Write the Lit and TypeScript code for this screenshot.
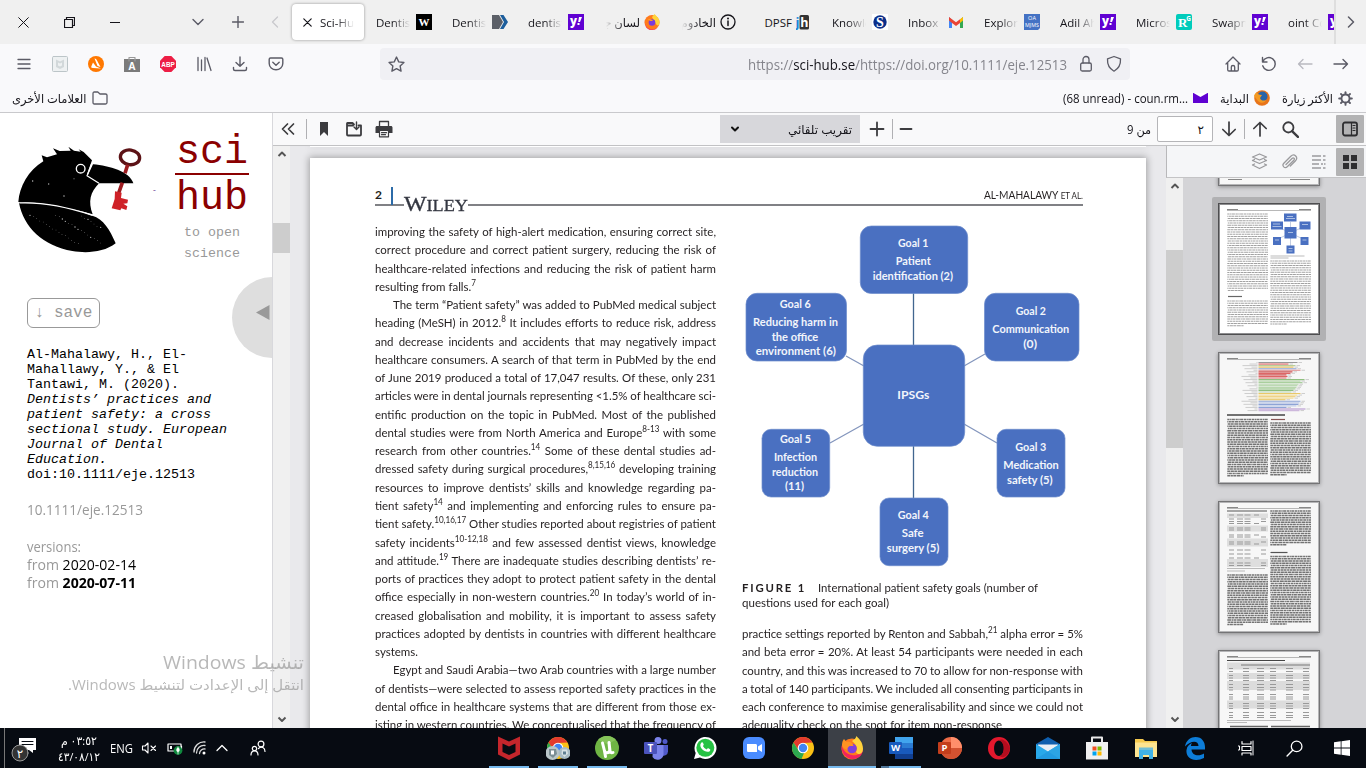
import { LitElement, html, svg, css } from "lit";
import { customElement, property } from "lit/decorators.js";

/* A run of text set to an exact measure: by word spacing, or by glyph width. */
@customElement("fit-text")
class FitText extends LitElement {
  @property({ type: Number }) w = 0;
  @property() mode = "scale";
  static styles = css`
    :host { display: inline-block; direction: ltr; white-space: nowrap; text-align: left; }
    .run { display: inline-block; transform-origin: 0 50%; }
  `;
  render() {
    return html`<span class="run"><slot></slot></span>`;
  }
  firstUpdated() {
    this.style.width = this.w + "px";
    const run = this.renderRoot.querySelector(".run") as HTMLElement;
    const natural = run.getBoundingClientRect().width;
    if (this.mode === "words") {
      const narrow = 0.955;
      const gaps = (this.textContent || "").trim().split(" ").length - 1;
      if (gaps > 0) run.style.wordSpacing = (this.w / narrow - natural) / gaps + "px";
      run.style.transform = `scaleX(${narrow})`;
    } else if (natural > 0) {
      run.style.transform = `scaleX(${this.w / natural})`;
    }
  }
}

const ic = (w: number, h: number, vb: string, body: unknown) =>
  html`<svg width=${w} height=${h} viewBox=${vb} fill="none" stroke-linecap="round" stroke-linejoin="round">${body}</svg>`;

/* ---------- favicons ---------- */
const fav: Record<string, unknown> = {
  wiley: svg`<rect width="16" height="16" fill="#000"/><text x="8" y="11.5" text-anchor="middle" font-family="Liberation Serif,serif" font-weight="700" font-size="11" fill="#fff">W</text>`,
  els: svg`<path d="M0 1h7l4 7-4 7H0z" fill="#5c6068"/><path d="M8 1h3.500l4.500 7-4.500 7H8l4-7z" fill="#1c5e9c"/>`,
  yahoo: svg`<rect width="16" height="16" fill="#6001d2"/><text x="2" y="11.300" font-family="Open Sans,sans-serif" font-weight="800" font-size="11.500" fill="#fff">y</text><path d="M11 3h3l-2 5h-1.800zM9.500 9h2v2h-2z" fill="#fff"/>`,
  fire: svg`<circle cx="8" cy="8.500" r="7.500" fill="#ff7a1c"/><path d="M1 6a7.500 7.500 0 0 0 14.500 4C14 15 10 16 8 16 3 16 0 12 1 6z" fill="#f5265f"/><path d="M8 3c1-1 2-2 2.500-3C12 2 16 4 15.500 9.500 15 12 13 12 12 10z" fill="#ffd43a"/><circle cx="8" cy="8.500" r="3.300" fill="#7a3cdc"/><path d="M3.500 5.500C6 4 8 5.500 9 7H6.500z" fill="#ffa024"/>`,
  info: svg`<circle cx="8" cy="8" r="7" stroke="#15141a" stroke-width="1.300"/><path d="M8 7v4.500" stroke="#15141a" stroke-width="1.500"/><circle cx="8" cy="4.500" r="1" fill="#15141a"/>`,
  jh: svg`<rect x="3.500" y="1" width="9.500" height="14.500" rx="1.500" fill="#333"/><text x="-.5" y="13" font-family="Open Sans,sans-serif" font-weight="700" font-size="13" fill="#1b86d8">j</text><text x="4.300" y="13" font-family="Open Sans,sans-serif" font-weight="700" font-size="12.500" fill="#fff">h</text>`,
  s: svg`<rect width="16" height="16" fill="#fff"/><circle cx="8" cy="8" r="6.700" fill="#0b2f8a"/><text x="8" y="12.800" text-anchor="middle" font-family="Liberation Serif,serif" font-weight="700" font-size="14" fill="#fff">S</text>`,
  gmail: svg`<path d="M1 3v11h3V6z" fill="#4285f4"/><path d="M12 6v8h3V3z" fill="#34a853"/><path d="M1 3l3 2.200L8 8.300l4-3.100V9l-4 3-4-3-3-2.500z" fill="#ea4335"/><path d="M12 5.200L15 3v3.500L12 9z" fill="#fbbc04"/>`,
  oa: svg`<path d="M0 0h16v14l-2 2H0z" fill="#4472c4"/><text x="8" y="6" text-anchor="middle" font-family="Open Sans,sans-serif" font-size="5.500" fill="#fff">OA</text><text x="1" y="12.500" font-family="Open Sans,sans-serif" font-size="5" fill="#fff" textLength="14" lengthAdjust="spacingAndGlyphs">MJMS</text>`,
  rg: svg`<rect width="16" height="16" rx="2" fill="#00ccbb"/><text x="2" y="13" font-family="Liberation Serif,serif" font-weight="700" font-size="13" fill="#fff">R</text><text x="10.200" y="6.500" font-family="Open Sans,sans-serif" font-weight="700" font-size="6.500" fill="#fff">G</text>`,
};
const tabs: Array<[string, string, boolean?]> = [
  ["Dentistry", "wiley"], ["Dentistry", "els"], ["dentistry", "yahoo"], ["لسان جاف", "fire", true],
  ["الخادوم غير", "info", true], ["DPSF", "jh"], ["Knowledge", "s"], ["Inbox (1)", "gmail"], ["Explorer", "oa"],
  ["Adil Ahmed", "yahoo"], ["Microsoft", "rg"], ["Swapna", "yahoo"], ["oint Com", "yahoo"],
];

/* ---------- browser navigation icons ---------- */
const G = "#5b5b66";
const nav = {
  menu: ic(16, 16, "0 0 16 16", svg`<path d="M2 3.500h12M2 8h12M2 12.500h12" stroke=${G} stroke-width="1.300"/>`),
  mc: ic(16, 16, "0 0 16 16", svg`<rect x=".5" y=".5" width="15" height="15" rx="1" fill="#eef1f2" stroke="#bcc5c8"/><path d="M4 3.500l4 2 4-2v7.500l-4 2-4-2z" fill="#d2d8da"/><path d="M6 6.500l2 1 2-1v3l-2 1-2-1z" fill="#eef1f2"/>`),
  avast: ic(16, 16, "0 0 16 16", svg`<circle cx="8" cy="8" r="8" fill="#ff7800"/><path d="M6.500 2.500c1.500 0 2 1 2.500 2l3.500 6.500L9.500 10zM5 6.500l3 4 5 2-8-.5c-2 0-2-1-1.500-2z" fill="#fff"/>`),
  bag: ic(16, 16, "0 0 16 16", svg`<path d="M0 3h16v13H0z" fill="#7b7b7b"/><path d="M5 5V1.500h6V5" stroke="#999" stroke-width="1.200"/><text x="8" y="13.500" text-anchor="middle" font-family="Open Sans,sans-serif" font-weight="700" font-size="10" fill="#fff">A</text>`),
  abp: ic(16, 16, "0 0 16 16", svg`<path d="M4.700 0h6.600L16 4.700v6.600L11.300 16H4.700L0 11.300V4.700z" fill="#ed1e45"/><text x="1.300" y="11" font-family="Liberation Sans,sans-serif" font-weight="700" font-size="8" textLength="13.500" lengthAdjust="spacingAndGlyphs" fill="#fff">ABP</text>`),
  lib: ic(16, 16, "0 0 16 16", svg`<path d="M2 1.500v13M5.500 4v10.500M9 1.500v13M11 2l4 12.500" stroke=${G} stroke-width="1.300"/>`),
  dl: ic(16, 16, "0 0 16 16", svg`<path d="M8 1v9M4 6.500L8 10.300l4-3.800M1.500 11.500V13c0 1 .8 1.500 1.500 1.500h10c.8 0 1.500-.5 1.500-1.500v-1.500" stroke=${G} stroke-width="1.400"/>`),
  pocket: ic(16, 16, "0 0 16 16", svg`<path d="M2.500 2h11c.8 0 1.300.5 1.300 1.300V7.500a6.800 6.300 0 0 1-13.600 0V3.300C1.200 2.500 1.700 2 2.500 2zM4.800 6.200L8 9.300l3.200-3.100" stroke=${G} stroke-width="1.400"/>`),
  star: ic(17, 17, "0 0 16 16", svg`<path d="M8 1l2.100 4.500 4.900.6-3.600 3.300.9 4.900L8 11.900l-4.300 2.400.9-4.900L1 6.100l4.900-.6z" stroke=${G} stroke-width="1.300"/>`),
  lock: ic(16, 18, "0 0 16 18", svg`<rect x="2.700" y="8" width="10.600" height="8" rx="1.500" stroke=${G} stroke-width="1.300"/><path d="M5 8V4.500a3 3 0 0 1 6 0V8" stroke=${G} stroke-width="1.300"/>`),
  shield: ic(16, 18, "0 0 16 18", svg`<path d="M8 1.500l6.500 2.300c.3 5.200-1.500 9.700-6.500 12.400C3 13.500 1.200 9 1.500 3.800z" stroke=${G} stroke-width="1.300"/>`),
  home: ic(16, 16, "0 0 16 16", svg`<path d="M1 8l7-7 7 7M2.700 7v6.700c0 .8.500 1.300 1.300 1.300h8c.8 0 1.300-.5 1.300-1.300V7M6.300 15v-4c0-1 .7-1.500 1.700-1.500s1.700.5 1.700 1.500v4" stroke=${G} stroke-width="1.300"/>`),
  reload: ic(16, 16, "0 0 16 16", svg`<path d="M1.500 1.500V6H6M1.800 5.800A6.400 6.400 0 1 1 1.700 9.800" stroke=${G} stroke-width="1.400"/>`),
  back: ic(16, 16, "0 0 16 16", svg`<path d="M15 8H1.500M6 3.500L1.500 8 6 12.500" stroke="#b9b9c0" stroke-width="1.300"/>`),
  fwd: ic(16, 16, "0 0 16 16", svg`<path d="M1 8h13.500M10 3.500L14.500 8 10 12.500" stroke=${G} stroke-width="1.400"/>`),
};
const teeth = [0, 45, 90, 135, 180, 225, 270, 315];
const gear = ic(15, 15, "0 0 16 16", svg`<circle cx="8" cy="8" r="4.300" stroke=${G} stroke-width="2"/>${teeth.map((a) => svg`<path d="M8 3V1.200" stroke=${G} stroke-width="2" transform="rotate(${a} 8 8)"/>`)}`);

/* ---------- PDF viewer icons ---------- */
const D = "#3c3c3f";
const L = "#9a9a9d";
const pdf = {
  dbl: ic(16, 16, "0 0 16 16", svg`<path d="M7.500 3L2.500 8l5 5M13.500 3l-5 5 5 5" stroke=${D} stroke-width="1.700"/>`),
  mark: ic(16, 16, "0 0 16 16", svg`<path d="M4 1h8v14l-4-4-4 4z" fill=${D}/>`),
  open: ic(16, 16, "0 0 16 16", svg`<path d="M8 3.500L6.500 2H1.500C1 2 1 2.300 1 3v10.500c0 .8.300 1 1 1h12c.7 0 1-.3 1-1V4.500h-2.500M1 4.500h6" stroke=${D} stroke-width="1.800"/><path d="M10.500 1v7M8 6l2.500 2.500L13 6" stroke=${D} stroke-width="1.400"/>`),
  print: ic(18, 18, "0 0 18 18", svg`<path d="M4.500 6V1.500h9V6" stroke=${D} stroke-width="1.300"/><path d="M2 6h14c.8 0 1.500.7 1.500 1.500V13H14v-2.500H4V13H.5V7.500C.5 6.700 1.200 6 2 6z" fill=${D}/><path d="M4.500 10.500h9v6.300h-9zM6.500 12.700h5M6.500 14.700h4" stroke=${D} stroke-width="1.200"/>`),
  chev: ic(10, 10, "0 0 10 10", svg`<path d="M2 3.500l3 3 3-3" stroke="#111" stroke-width="2"/>`),
  plus: ic(16, 16, "0 0 16 16", svg`<path d="M1.500 8h13M8 1.500v13" stroke=${D} stroke-width="1.800"/>`),
  minus: ic(14, 16, "0 0 14 16", svg`<path d="M1.500 8h11" stroke=${D} stroke-width="1.800"/>`),
  down: ic(16, 16, "0 0 16 16", svg`<path d="M8 1v13M1.800 8.500L8 14.500l6.200-6" stroke=${D} stroke-width="1.700"/>`),
  up: ic(16, 16, "0 0 16 16", svg`<path d="M8 15V2M1.800 7.500L8 1.500l6.200 6" stroke=${D} stroke-width="1.700"/>`),
  find: ic(17, 17, "0 0 16 16", svg`<circle cx="6" cy="6" r="4.800" stroke=${D} stroke-width="1.700"/><path d="M9.700 9.700L15 15" stroke=${D} stroke-width="2.200"/>`),
  side: ic(16, 16, "0 0 16 16", svg`<rect x="1" y="1.500" width="14" height="13" rx="2" stroke="#2e2e30" stroke-width="1.800"/><path d="M9.500 2v12M11 4.500h2M11 7h2M11 9.500h2" stroke="#2e2e30" stroke-width="1.200"/>`),
  layers: ic(17, 17, "0 0 17 17", svg`<path d="M8.500 1l7 3-7 3-7-3zM1.500 7.500l7 3 7-3M1.500 7.500l2-1M15.500 7.500l-2-1M1.500 12l7 3.500 7-3.500M1.500 12l2-1M15.500 12l-2-1" stroke=${L} stroke-width="1.300"/>`),
  clip: ic(17, 17, "0 0 17 17", svg`<path d="M5 11.500l6-6c1.500-1.500 3.200.2 1.800 1.700l-6.300 6.300c-2.800 2.800-6-.8-3.700-3.300l7-7c3.500-3.300 8 1.200 4.500 4.800l-5 5" stroke=${L} stroke-width="1.300"/>`),
  outline: ic(16, 16, "0 0 16 16", svg`<path d="M1 2h9M1 6h9M1 10h7M1 14h9M12 2h2.500M12 6h2.500M10 10h2M13 10h1.500M12 14h2.500" stroke=${L} stroke-width="1.700" stroke-linecap="butt"/>`),
  grid: ic(16, 16, "0 0 16 16", svg`<path d="M1 1h6v6H1zM9 1h6v6H9zM1 9h6v6H1zM9 9h6v6H9z" fill="#2e2e30"/>`),
};
const arrowUp = ic(10, 10, "0 0 10 10", svg`<path d="M1.500 7L5 3.500 8.500 7" stroke="#555" stroke-width="1.900" stroke-linecap="butt"/>`);
const arrowDn = ic(10, 10, "0 0 10 10", svg`<path d="M1.500 3.500L5 7l3.500-3.500" stroke="#555" stroke-width="1.900" stroke-linecap="butt"/>`);

/* ---------- raven logo ---------- */
const specks: Array<[number, number]> = [];
for (let i = 0; i < 46; i++) specks.push([90 + ((i * 67) % 220), 310 + ((i * 41) % 90)]);
const raven = html`<svg class="raven" width="148" height="148" viewBox="0 0 444 444">
  <path d="M55 270C58 225 85 175 130 148l-5-18 16 6 30-9-12-18 20 8 33-1-7-12 17 12 20 3-6-7 15 8 25 25-15 42 37 26c-28 28-34 55-20 94C200 285 110 268 55 270z" fill="#000"/>
  <path d="M279 157c50 5 108 20 121 57H297l-34-23z" fill="#000"/>
  <path d="M57 272c62-3 152 12 220 39 33 10 53 42 70 83-35 28-90 30-130 23C130 402 70 345 57 272z" fill="#000"/>
  <path d="M58 273c70-3 150 14 220 37M297 214l-36-23 14-36" fill="none" stroke="#fff" stroke-width="3.500"/>
  <circle cx="242" cy="170" r="13" fill="none" stroke="#fff" stroke-width="4"/>
  ${specks.filter(([x, y]) => x > 80 + (y - 305) * 1.1).map(([x, y], i) => svg`<circle cx=${x} cy=${y} r=${i % 5 ? 1.1 : 2} fill="#bbb"/>`)}
  <circle cx="98" cy="207" r="2" fill="#ccc"/><circle cx="146" cy="216" r="2" fill="#bbb"/><circle cx="192" cy="252" r="2" fill="#ccc"/><circle cx="222" cy="200" r="1.500" fill="#bbb"/>
  <ellipse cx="390" cy="136" rx="29" ry="22" fill="none" stroke="#5c1216" stroke-width="10" transform="rotate(8 390 136)"/>
  <path d="M383 158l-8 26M367 212l-12 34" stroke="#9c1c20" stroke-width="11"/>
  <path d="M345 238l20 4-2 16 21 5-2 11-12 1 12 8-3 11-15-5-3 6-26-6 9-28z" fill="#cf2127"/>
</svg>`;

/* ---------- article ---------- */
type Line = [string, number?, number?]; // text with ^sup^ marks, measure, indent
const left: Line[] = [
  ["improving the safety of high-alert medication, ensuring correct site,"],
  ["correct procedure and correct patient surgery, reducing the risk of"],
  ["healthcare-related infections and reducing the risk of patient harm"],
  ["resulting from falls.^7^", 101],
  ["The term “Patient safety” was added to PubMed medical subject", 323, 18],
  ["heading (MeSH) in 2012.^8^ It includes efforts to reduce risk, address"],
  ["and decrease incidents and accidents that may negatively impact"],
  ["healthcare consumers. A search of that term in PubMed by the end"],
  ["of June 2019 produced a total of 17,047 results. Of these, only 231"],
  ["articles were in dental journals representing <1.5% of healthcare sci-"],
  ["entific production on the topic in PubMed. Most of the published"],
  ["dental studies were from North America and Europe^8-13^ with some"],
  ["research from other countries.^14^ Some of these dental studies ad-"],
  ["dressed safety during surgical procedures,^8,15,16^ developing training"],
  ["resources to improve dentists’ skills and knowledge regarding pa-"],
  ["tient safety^14^ and implementing and enforcing rules to ensure pa-"],
  ["tient safety.^10,16,17^ Other studies reported about registries of patient"],
  ["safety incidents^10-12,18^ and few assessed dentist views, knowledge"],
  ["and attitude.^19^ There are inadequate studies describing dentists’ re-"],
  ["ports of practices they adopt to protect patient safety in the dental"],
  ["office especially in non-western countries.^20^ In today’s world of in-"],
  ["creased globalisation and mobility, it is important to assess safety"],
  ["practices adopted by dentists in countries with different healthcare"],
  ["systems.", 43],
  ["Egypt and Saudi Arabia—two Arab countries with a large number", 323, 18],
  ["of dentists—were selected to assess reported safety practices in the"],
  ["dental office in healthcare systems that are different from those ex-"],
  ["isting in western countries. We conceptualised that the frequency of"],
];
const right: Line[] = [
  ["practice settings reported by Renton and Sabbah,^21^ alpha error = 5%"],
  ["and beta error = 20%. At least 54 participants were needed in each"],
  ["country, and this was increased to 70 to allow for non-response with"],
  ["a total of 140 participants. We included all consenting participants in"],
  ["each conference to maximise generalisability and since we could not"],
  ["adequality check on the spot for item non-response", 260],
];
const line = ([t, w = 341, ind = 0]: Line) => {
  const parts = t.split("^");
  return html`<div class="ln ${ind ? "ind" : ""}"><fit-text .w=${w} mode=${w < 110 ? "scale" : "words"}>${parts.map((p, i) => (i % 2 ? html`<sup>${p}</sup>` : p))}</fit-text></div>`;
};

/* nodes: x, y, w, h, radius, then labels as [text, x1, x2, baseline] */
const nodes: Array<{ b: number[]; t: Array<[string, number, number, number]> }> = [
  { b: [860.3, 226, 107.4, 67.500, 11], t: [["Goal 1", 898, 928.3, 247], ["Patient", 895.7, 930.7, 265], ["identification (2)", 872.7, 953, 279.7]] },
  { b: [746, 293.3, 100.500, 67.700, 11], t: [["Goal 6", 779.7, 810.7, 308.3], ["Reducing harm in", 753, 838, 326], ["the office", 771.7, 818.3, 341], ["environment (6)", 755.7, 836, 355]] },
  { b: [984.5, 293.3, 94.500, 67.700, 11], t: [["Goal 2", 1015.7, 1046, 315.3], ["Communication", 992.3, 1069.3, 333.3], ["(0)", 1023.3, 1037, 348]] },
  { b: [863.3, 345, 101.400, 101.300, 14], t: [["IPSGs", 897.3, 929.3, 399.3]] },
  { b: [762, 429.3, 67.700, 67.700, 9], t: [["Goal 5", 780, 811, 443], ["Infection", 774, 817, 461], ["reduction", 772, 818, 476], ["(11)", 785, 804, 490]] },
  { b: [997, 429.3, 68, 67.700, 9], t: [["Goal 3", 1015.3, 1046.3, 451.3], ["Medication", 1003.3, 1058.7, 469.3], ["safety (5)", 1007, 1052.7, 484]] },
  { b: [880, 498, 68, 67.700, 9], t: [["Goal 4", 897.7, 928.7, 519], ["Safe", 901.7, 923.7, 536.7], ["surgery (5)", 886.7, 939.3, 551.7]] },
];
const figure = html`<svg class="figure" width="341" height="352" viewBox="742 220 341 352">
  <path d="M913.500 293v53M913.500 446v53" stroke="#41668f" stroke-width="1.300"/>
  <path d="M846 356l18 10M964 366l21-12M964 424l33 19M864 424l-34 19" stroke="#8496bd" stroke-width="1.300"/>
  ${nodes.map((n) => svg`<rect x=${n.b[0]} y=${n.b[1]} width=${n.b[2]} height=${n.b[3]} rx=${n.b[4]} fill="#4a70c1" stroke="#6d8ccc" stroke-width=".7"/>
    ${n.t.map(([s, a, b, y]) => svg`<text x=${a} y=${y} textLength=${b - a} lengthAdjust="spacingAndGlyphs" class="nt">${s}</text>`)}`)}
</svg>`;

/* ---------- thumbnails ---------- */
const textBlock = (x: number, y1: number, y2: number, w: number, ink: string, sw = 1.3) => {
  const out = [];
  let i = 0;
  for (let y = y1; y < y2; y += 2.25, i++) {
    const last = y + 2.25 >= y2;
    out.push(svg`<path d="M${x} ${y}h${last ? w * 0.4 : w}" stroke=${ink} stroke-width=${sw} stroke-dasharray="${2.3 + (i % 3) * 0.8} .5 ${1.4 + (i % 4) * 0.6} .4 3 .6" stroke-dashoffset=${(i * 7) % 5}/>`);
  }
  return out;
};
const header = svg`<path d="M9 7.500h84" stroke="#999" stroke-width=".7"/><path d="M9 6.500h11M81 6.500h12" stroke="#888" stroke-width="1"/>`;
const barData: Array<[number, string]> = [
  [39, "#999"], [30, "#d66"], [37, "#b8cf9a"], [35, "#e8c46a"], [38, "#8ea4d6"], [42, "#d88"], [34, "#c55"], [32, "#d66"], [28, "#c44"], [29, "#d66"], [28, "#d77"],
  [46, "#8fbf7f"], [42, "#b9d6ae"], [44, "#a9cf9d"], [40, "#b9d6ae"], [39, "#a9cf9d"], [38, "#b9d6ae"], [37, "#a9cf9d"], [35, "#8fbf7f"], [33, "#b9d6ae"], [42, "#e9c868"], [39, "#f2dd9a"],
  [37, "#efd388"], [35, "#f2dd9a"], [27, "#e9c868"], [42, "#8ea4d6"], [41, "#c0cce8"], [40, "#8ea4d6"], [38, "#c0cce8"], [28, "#8ea4d6"], [47, "#b08ccc"], [41, "#cdb8dc"],
];
const P2 = "#a2a2a2";
const P3 = "#747474";
const thumbs = [
  svg`<path d="M10 125.500h14M72 125.500h20" stroke="#888" stroke-width="1.200"/>`,
  svg`${header}${textBlock(9.3, 11, 88, 40.700, P2, 1)}<path d="M10 93.500h14" stroke="#666" stroke-width="1.200"/>${textBlock(9.3, 98, 123, 40.700, P2, 1)}
    <path d="M72.500 19v27M60 24l25 12M85 24L60 36" stroke="#9aabce" stroke-width=".6"/>
    <path d="M66 10.500h12.500v8H66zM53 18.500h12v8H53zM81.500 18.500h11v8h-11zM66.500 24h12v11.500h-12zM55 34h8v8h-8zM82.500 34h8v8h-8zM68.500 42.500h8v8h-8z" fill="#4a70c1"/>
    <path d="M69 13.500h6M68 15.500h9M55 21h7M54.500 23.500h9M84 21.500h6M70 29.500h5M57 37h4M84.500 37h4M70.500 45.500h4M70.500 48h4" stroke="#d3def2" stroke-width=".7"/>
    <path d="M52.500 53h34M52.500 55h18" stroke="#aaa" stroke-width=".8"/>${textBlock(52.300, 58, 123, 40.700, P2, 1)}`,
  svg`${header}${barData.map(([w, c], i) => svg`<path d="M40.500 ${10.500 + i * 1.55}h${w}" stroke=${c} stroke-width="1.150"/><path d="M${41.500 + w} ${10.500 + i * 1.55}h3.500M${38.500 - ((i * 7) % 16)} ${10.500 + i * 1.55}H39.500" stroke="#bbb" stroke-width=".7"/>`)}
    <path d="M9 63h58" stroke="#444" stroke-width="1.300"/>${textBlock(9.3, 67.500, 124, 40.700, P3, 1.5)}<path d="M53 67.500h14" stroke="#855" stroke-width="1.200"/>${textBlock(52.300, 71, 124, 40.700, P3, 1.5)}`,
  svg`${header}<path d="M9 10h40" stroke="#555"/><path d="M9 12.500h41v4.500H9zM9 24.500h41v6H9zM9 37.500h41v8H9zM9 58h41v8H9z" fill="#dedede"/>
    ${[14, 18, 20.500, 22.500, 27, 29, 34, 36, 41, 43, 49, 53, 57, 62, 64.500].map((y, i) => svg`<path d="M11 ${y}h5M19 ${y}h6M26.500 ${y}h6M${i % 3 ? 43 : 36} ${y}h5" stroke="#999" stroke-width="1"/>`)}
    <path d="M9 67.500h38M9 70h18" stroke="#aaa" stroke-width=".8"/>${textBlock(9.3, 74, 124, 40.700, P3, 1.5)}${textBlock(52.300, 10, 46, 40.700, P3, 1.5)}<path d="M52.500 51.500h17" stroke="#555" stroke-width="1.200"/>${textBlock(52.300, 55.500, 124, 40.700, P3, 1.5)}`,
  svg`${header}<path d="M9 10.500h58" stroke="#444" stroke-width="1.100"/><path d="M9 12.500h83v7H9zM9 23h83v6H9zM9 31h83v9H9zM9 50.500h83v8H9z" fill="#dcdcdc"/><path d="M23 15h69" stroke="#aaa" stroke-width="2"/>
    ${[18.500, 21.500, 25.500, 28, 30.500, 34.500, 37.500, 40, 44.500, 47, 49, 53.500, 56, 58.500, 62.500, 65.500, 67.500].map((y) => svg`<path d="M11 ${y}h4M25 ${y}h6M39 ${y}h7M52 ${y}h6M68 ${y}h7M85 ${y}h6" stroke="#999" stroke-width="1"/>`)}
    <path d="M9 70.500h64M9 72.500h20" stroke="#aaa" stroke-width=".8"/><path d="M12 76.500h38M53 76.500h39" stroke="#666" stroke-width="1.400"/>`,
];

/* ---------- taskbar ---------- */
const chromeRing = svg`<circle cx="12" cy="12" r="11" fill="#fbc116"/><path d="M2.500 6.500A11 11 0 0 1 21.500 6.500L12 7 7.500 14z" fill="#e33b2e"/><path d="M2.500 6.500L8 15l5 2-2.500 6A11 11 0 0 1 2.500 6.500z" fill="#2da94f"/><circle cx="12" cy="12" r="5.300" fill="#fff"/><circle cx="12" cy="12" r="4.200" fill="#4285f4"/>`;
const apps: Array<[string, unknown]> = [
  ["run", svg`<path d="M1 .5l11 5L23 .5v18l-11 5.500-11-5.500zM5.500 7.500V16l6.500 3 6.500-3V7.500L12 10.500z" fill="#c5262c" fill-rule="evenodd"/>`],
  ["run", svg`${chromeRing}<circle cx="6.500" cy="17" r="7" fill="#b9c6c9"/><path d="M3 13h7l1 5-4 4-4-3z" fill="#7c8f94"/><path d="M5 14.500h3v4H5z" fill="#fff"/><circle cx="18.500" cy="17" r="6" fill="#a9bcc4"/><path d="M16 13.500h5l1 4-3.500 3.500-3-3z" fill="#d7e2e4"/><path d="M17 15.500h3v3h-3z" fill="#5f7f92"/>`],
  ["run", svg`<circle cx="12" cy="12" r="12" fill="#6fb544"/><path d="M3 4a12 12 0 0 1 18 0L12 8z" fill="#85c45a"/><path d="M7.500 7l2 8c.8 2.500 4.500 2.200 5.300-.5L14 6.500l1 8.500c.5 1.800 2 2 3 1.500M9.500 15l1 5.500" stroke="#fff" stroke-width="3"/>`],
  ["", svg`<circle cx="21" cy="5.500" r="2.500" fill="#5059c9"/><circle cx="14" cy="4.500" r="3.500" fill="#7b83eb"/><path d="M16 9h8v6.500a4.500 4.500 0 0 1-6 4z" fill="#5059c9"/><path d="M9 9h10.500v8a6 6 0 0 1-11 4z" fill="#7b83eb"/><rect y="6" width="13" height="12" rx="1" fill="#4b53bc"/><text x="6.500" y="15.500" text-anchor="middle" font-family="Open Sans,sans-serif" font-weight="700" font-size="10" fill="#fff">T</text>`],
  ["", svg`<path d="M1 23l1.700-6A11 11 0 1 1 7 21.500z" fill="#fff"/><circle cx="12.300" cy="11.800" r="9" fill="#26c243"/><path d="M8.500 6.500c1-.8 1.500-.2 2.300 2.200-.9 1.100-.9 1.400-.2 2.300 1 1.400 2 2 3 2.400 1-.9 1.200-1.500 1.800-1.100 2.200 1 2.200 1.300 1.600 2.600C13.500 18 6 12.500 7.500 8z" fill="#fff"/>`],
  ["", svg`<rect x="1" y="1" width="22" height="22" rx="6" fill="#4a8cff"/><path d="M5 8h8.500c1 0 1.500.7 1.500 1.500V16H6.500C5.500 16 5 15.500 5 14.500zM16 10.500L20 8v8l-4-2.500z" fill="#fff"/>`],
  ["", chromeRing],
  ["on", svg`<circle cx="12" cy="13" r="10.500" fill="#ff7a1c"/><path d="M1.500 9c-1 9 6 14.500 11.500 14 7-.5 10-5 10-10-3 6-8 7-11 6C6 18 3 14 1.500 9z" fill="#f2245e"/><path d="M12 5c2-1 4-3 4.500-5C19 3 23 6 23 13c0 5-5 7-7 3 2-4 0-8-4-11z" fill="#ffd23c"/><circle cx="12" cy="12.500" r="4.800" fill="#8040dd"/><path d="M2 9c0-3 1-5 2-6l2.500 3c3-1 6.500 1 7 4h-4c-1 1-2.500 1.500-2 4C4 13 2.500 11 2 9z" fill="#ff9322"/>`],
  ["run word", svg`<rect x="6" y="1" width="18" height="22" rx="1.500" fill="#2b7cd3"/><path d="M6 1h18v6H6z" fill="#41a5ee"/><path d="M6 12h18v6H6z" fill="#185abd"/><path d="M6 18h18v5H6z" fill="#103f91"/><rect y="6" width="13" height="12" rx="1" fill="#185abd"/><text x="6.500" y="15.300" text-anchor="middle" font-family="Open Sans,sans-serif" font-weight="700" font-size="9.500" fill="#fff">W</text>`],
  ["", svg`<circle cx="13" cy="12" r="11" fill="#ed6c47"/><path d="M13 1a11 11 0 0 1 11 11H13z" fill="#ff8f6b"/><path d="M2 12h22A11 11 0 0 1 2 12z" fill="#d35230"/><rect y="6" width="13" height="12" rx="1" fill="#c43e1c"/><text x="6.500" y="15.300" text-anchor="middle" font-family="Open Sans,sans-serif" font-weight="700" font-size="9.500" fill="#fff">P</text>`],
  ["", svg`<path d="M12 1a11 11.300 0 1 0 0 22.600A11 11.300 0 1 0 12 1zm0 3.500c6.500 0 6.500 15.500 0 15.500S5.500 4.500 12 4.500z" fill="#e3182d" fill-rule="evenodd"/><path d="M12 4.500C14 2 20 4 23 12c-1 8-7 11-10.500 8 5.500-1 6-14-.5-15.500z" fill="#b30d1e"/>`],
  ["", svg`<path d="M0 8l12-7 12 7v4H0z" fill="#0f5fae"/><path d="M2 8.500h20v9H2z" fill="#e9eff5"/><path d="M0 8l12 7.500L24 8v15H0z" fill="#29a9ea"/><path d="M24 8v15L12 15.500z" fill="#4cc5f5"/><path d="M0 23l24-15v15z" fill="#1f95dd" opacity=".7"/>`],
  ["", svg`<path d="M7 7V1.500h10V7" stroke="#e8e8e8" stroke-width="2"/><path d="M1 6h22v17.500H1z" fill="#f0f0f0"/><path d="M7.500 10.500h4v4h-4z" fill="#f25022"/><path d="M12.500 10.500h4v4h-4z" fill="#7fba00"/><path d="M7.500 15.500h4v4h-4z" fill="#00a4ef"/><path d="M12.500 15.500h4v4h-4z" fill="#ffb900"/>`],
  ["", svg`<path d="M1 3h8l2 2h12v16H1z" fill="#f5c94e"/><path d="M1 6.500h22V21H1z" fill="#fde491"/><path d="M5 23v-9h14v9h-4v-4H9v4z" fill="#3fb2e8"/><path d="M5 11.500h14V14H5z" fill="#4cb4e7" opacity=".8"/>`],
  ["", svg`<path d="M2 10.500C3 4 8 1 12.500 1 19 1 22 6 22 11v2.500H8.500c.3 6.500 8 7 12.500 4v4.500C11 27 2.500 22 3.500 14 4 10 6.500 8 9 7c-.8 1-1 2-1 3h7.500c0-6-8-5.500-13.500.5z" fill="#0d7dd8"/>`],
];
const sys = [
  ic(16, 16, "0 0 16 16", svg`<path d="M4 1.500v2.500h9V1.500M4 6.500h9v4H4zM4 15v-2h9v2" stroke="#fff" stroke-width="1.200"/><path d="M0 6h1.500v4H0M15 1v14" stroke="#fff" stroke-width="1"/>`),
  ic(17, 17, "0 0 16 16", svg`<circle cx="10" cy="6" r="5" stroke="#fff" stroke-width="1.200"/><path d="M6.300 9.700L1 15" stroke="#fff" stroke-width="1.300"/>`),
  ic(16, 16, "0 0 16 16", svg`<path d="M0 2.300L6.700 1.300V7.500H0zM7.500 1.200L16 0v7.500H7.500zM0 8.500h6.700v6.300L0 13.800zM7.500 8.500H16V16l-8.500-1.200z" fill="#fff"/>`),
];

@customElement("app-root")
class AppRoot extends LitElement {
  static styles = css`
    :host { display: block; width: 1366px; height: 768px; overflow: hidden; position: relative; background: #fff;
      font-family: "Open Sans", "Noto Sans", "DejaVu Sans", sans-serif; font-size: 12px; color: #15141a; }
    * { box-sizing: border-box; }
    svg { display: block; flex: none; }
    .screen { display: flex; flex-direction: column; height: 768px; }
    .row { display: flex; align-items: center; }
    .cell { display: flex; align-items: center; justify-content: center; flex: none; }
    .grow { flex: 1; }
    fit-text { flex: none; }

    .tabs { height: 44px; background: #f0f0f0; }
    .win { width: 46px; } .all { width: 40px; margin-left: 40px; } .new { width: 39px; } .prev { width: 35px; }
    .active { width: 72px; height: 36px; background: #fff; border-radius: 4px; box-shadow: 0 0 3px rgba(0,0,0,.4); padding-left: 11px; gap: 8px; margin-right: 2px; }
    .strip { flex: 1; display: flex; overflow: hidden; height: 44px; }
    .tab { width: 76px; flex: none; display: flex; align-items: center; padding-left: 10px; gap: 4px; }
    .lbl { width: 36px; overflow: hidden; white-space: nowrap; font-size: 11.500px; mask-image: linear-gradient(90deg, #000 45%, transparent 95%); }
    .lbl.ar { direction: rtl; mask-image: linear-gradient(270deg, #000 45%, transparent 95%); }
    .lbl.full { mask-image: none; text-align: right; }
    .next { width: 32px; height: 44px; border-left: 2px solid #dedede; }

    .nav { height: 40px; background: #f9f9fb; padding-left: 6px; }
    .nav .cell { width: 36px; }
    .url { width: 750px; height: 32px; background: #f0f0f4; border-radius: 4px; margin: 0 85px 0 86px; padding: 0 8px; font-size: 14px; color: #85858c; flex: none; }
    .url b { font-weight: 400; color: #15141a; }
    .url .lk { margin: 0 12px 0 11px; }
    .marks { height: 28px; background: #f9f9fb; padding: 0 13px 0 12px; }
    .g5 { gap: 5px; }
    .m1 { margin-right: 12px; }

    .main { display: flex; height: 616px; border-top: 1px solid #c9c9cc; overflow: hidden; }
    .hub { width: 273px; flex: none; border-right: 1px solid #d8d8dc; overflow: hidden; position: relative; font-family: "Liberation Mono", monospace; }
    .brand { display: flex; height: 185px; }
    .raven { margin-top: -1px; }
    .dash { width: 8px; margin: 72px 0 0 4px; color: #551a8b; font-size: 8px; }
    .names { display: flex; flex-direction: column; align-items: center; margin-left: 12px; width: 80px; }
    .sci { font-size: 40px; line-height: 42px; color: #8b0000; height: 43px; margin-top: 19px; }
    .names .bar { width: 74px; height: 2px; background: #8b0000; margin-top: -2px; }
    .names .two { height: 44px; line-height: 42px; margin-top: 3px; }
    .motto { font-size: 13.300px; line-height: 21px; color: #999; margin-top: 0; }
    .save { margin-left: 27px; width: 73px; height: 30px; border: 1px solid #999; border-radius: 6px; color: #999; font-size: 16px; display: flex; align-items: center; justify-content: center; white-space: pre; }
    .cite { margin: 19px 0 0 27px; font-size: 13.330px; line-height: 15px; white-space: pre; color: #000; }
    .meta { margin: 19px 0 0 27px; font-family: "Open Sans", sans-serif; font-size: 14px; line-height: 18px; color: #999; }
    .meta .v { margin-top: 19px; }
    .meta s { text-decoration: none; color: #000; }
    .ball { position: absolute; left: 232px; top: 164px; width: 81px; height: 81px; border-radius: 50%; background: #dedede; padding: 28px 0 0 24px; }

    .viewer { flex: 1; display: flex; flex-direction: column; min-width: 0; }
    .bar2 { height: 33px; background: #f9f9fa; border-bottom: 1px solid #c2c2c4; flex: none; }
    .w30 { width: 30px; }
    .w26 { width: 26px; }
    .w31 { width: 31px; }
    .sep { width: 1px; height: 20px; background: #b0b0b3; flex: none; }
    .sep.a { margin: 0 2px 0 3px; }
    .zoom { width: 140px; height: 28px; background: #d7d7db; margin: 0 2px 0 321px; padding: 0 8px 0 10px; display: flex; align-items: center; justify-content: space-between; flex: none; }
    .pg { width: 56px; height: 26px; border: 1px solid #b5b5b8; border-radius: 2px; background: #fff; padding-right: 8px; display: flex; align-items: center; justify-content: flex-end; margin: 0 1px 0 6px; flex: none; }
    .btn { width: 28px; height: 28px; background: #b3b3b4; border-radius: 1px; }
    .btn.a { margin: 0 2px 0 30px; }
    .body { display: flex; flex: 1; min-height: 0; }
    .sb { width: 17px; background: #f0f0f0; display: flex; flex-direction: column; align-items: center; flex: none; }
    .sb i { display: block; width: 17px; background: #cdcdcd; }
    .sb .up { height: 15px; padding-top: 3px; }
    .sb .dn { margin-top: auto; height: 14px; }
    .sb .t1 { height: 30px; margin-top: 62px; }
    .sb .t2 { height: 198px; margin-top: 57px; }
    .canvas { width: 876px; flex: none; background: #e9e9ec; padding: 0 20px; overflow: hidden; }
    .prevpage { height: 1px; background: #fff; box-shadow: 0 0 6px #aaa; }
    .page { margin-top: 11px; height: 640px; background: #fff; box-shadow: 0 0 7px 1px rgba(0,0,0,.32); padding: 29px 63px 0 65px; font-family: Lato, sans-serif; font-size: 12px; color: #231f20; }
    .head { display: flex; height: 36px; align-items: flex-start; }
    .num { width: 29px; height: 19px; border-bottom: 2px solid #808185; display: flex; font-size: 12px; font-weight: 700; }
    .num span { width: 16px; } .num i { width: 2px; height: 18px; background: #2c6ba8; }
    .wiley { font-family: "Liberation Serif", serif; font-size: 16px; line-height: 18px; margin-top: 10px; color: #333640; -webkit-text-stroke: .3px #333640; }
    .wiley big { font-size: 21px; line-height: 1px; }
    .rule { flex: 1; height: 19px; border-bottom: 2px solid #808185; text-align: right; }
    .rule small { font-size: 9.500px; }
    .cols { display: flex; gap: 25px; }
    .col { width: 342px; }
    .ln { height: 18.270px; line-height: 18.270px; white-space: nowrap; }
    .ind { padding-left: 18px; }
    sup { font-size: 8.500px; line-height: 0; vertical-align: 5px; }
    .figure { margin: -3px 0 0; }
    .nt { font: 700 12px Lato, sans-serif; fill: #f2f5fb; }
    .cap { font-size: 11.300px; line-height: 15px; margin: 8px 0 0; height: 45px; padding-top: .4px; }
    .cap div { height: 15px; }
    .cap b { letter-spacing: 1.800px; margin-right: 9px; }
    .side { width: 200px; flex: none; display: flex; flex-direction: column; }
    .sbar { height: 32px; background: #f5f6f8; justify-content: flex-end; padding-right: 2px; border-bottom: 1px solid #c4c4c6; border-left: 1px solid #b8b8ba; flex: none; }
    .sbar .btn { margin-left: 2px; }
    .panel { display: flex; flex: 1; min-height: 0; overflow: hidden; }
    .list { flex: 1; background: #d4d4d7; padding-left: 29px; overflow: hidden; display: flex; flex-direction: column; }
    .tw { width: 114px; height: 144px; padding: 6px; margin-bottom: 5px; flex: none; }
    .tw.first { margin-top: -130px; }
    .tw.sel { background: #b1b1b3; border-radius: 2px; }
    .th { width: 102px; height: 132px; background: #f7f7f7; border: 1px solid #747476; box-shadow: inset 0 0 0 1px #b5b5b7, 0 1px 4px rgba(0,0,0,.35); overflow: hidden; }
    .sel .th { background: #fff; border-color: #4e4e50; box-shadow: inset 0 0 0 1px #8d8d8f; }
    .th svg { margin: -1px; }

    .task { height: 40px; background: #070b12; color: #fff; }
    .desk { width: 5px; height: 40px; border-right: 1px solid #777; }
    .note { width: 39px; }
    .clock { width: 44px; margin-left: 13px; display: flex; flex-direction: column; align-items: center; gap: 1px; font-size: 11.500px; }
    .clock fit-text { line-height: 15px; height: 15px; }
    .eng { margin: 0 8px 0 9px; }
    .bat { margin-left: 10px; } .wifi { margin-left: 9px; } .more { margin-left: 9px; } .ppl { margin-left: 22px; }
    .app { width: 48px; height: 40px; margin-right: 1px; padding-top: 8px; display: flex; flex-direction: column; align-items: center; justify-content: space-between; flex: none; }
    .app.run::after { content: ""; width: 40px; height: 2px; background: #76b9ed; }
    .app.on { background: #3c4047; }
    .app.on::after { content: ""; width: 48px; height: 2px; background: #76b9ed; }
    .app.word::after { background: linear-gradient(90deg, #4f7699 8px, #76b9ed 8px); }
    .sysb { width: 48px; }
    .sysb.a { margin-left: 2px; }
    .water { position: absolute; right: 1062px; top: 648px; color: rgba(150,150,150,.68); display: flex; flex-direction: column; align-items: flex-end; }
    .water .a { font-size: 19px; line-height: 28px; height: 26px; }
    .water .b { font-size: 14px; line-height: 22px; }
  `;

  render() {
    const K = "#15141a";
    return html`<div class="screen">
      <div class="row tabs">
        <div class="cell win">${ic(11, 11, "0 0 11 11", svg`<path d="M.7.7l9.600 9.600M10.300.7L.7 10.300" stroke=${K}/>`)}</div>
        <div class="cell win">${ic(11, 11, "0 0 11 11", svg`<path d="M.5 2.500h8v8h-8zM2.500 2.500v-2h8v8h-2" stroke=${K} stroke-width="1.200"/>`)}</div>
        <div class="cell win">${ic(10, 11, "0 0 10 11", svg`<path d="M0 5.500h10" stroke=${K} stroke-linecap="butt"/>`)}</div>
        <div class="cell all">${ic(12, 8, "0 0 12 8", svg`<path d="M1 1.500l5 5 5-5" stroke=${G} stroke-width="1.400"/>`)}</div>
        <div class="cell new">${ic(12, 12, "0 0 12 12", svg`<path d="M.5 6h11M6 .5v11" stroke=${G} stroke-width="1.400"/>`)}</div>
        <div class="cell prev">${ic(8, 12, "0 0 8 12", svg`<path d="M6.500 1l-5 5 5 5" stroke="#c9c9cd" stroke-width="1.300"/>`)}</div>
        <div class="row active">${ic(9, 9, "0 0 9 9", svg`<path d="M.8.8l7.400 7.400M8.200.8L.8 8.200" stroke=${K} stroke-width="1.200"/>`)}<span class="lbl">Sci-Hub</span></div>
        <div class="strip">${tabs.map(([t, f, ar]) => html`<div class="tab"><span class="lbl ${ar ? "ar" : ""} ${t === "DPSF" ? "full" : ""}">${t}</span>${ic(16, 16, "0 0 16 16", fav[f])}</div>`)}</div>
        <div class="cell next">${ic(8, 12, "0 0 8 12", svg`<path d="M1.500 1l5 5-5 5" stroke=${G} stroke-width="1.500"/>`)}</div>
      </div>
      <div class="row nav">
        ${[nav.menu, nav.mc, nav.avast, nav.bag, nav.abp, nav.lib, nav.dl, nav.pocket].map((i) => html`<div class="cell">${i}</div>`)}
        <div class="row url">${nav.star}<span class="grow"></span><fit-text .w=${319}>https://<b>sci-hub.se</b>/https://doi.org/10.1111/eje.12513</fit-text><span class="lk">${nav.lock}</span>${nav.shield}</div>
        ${[nav.home, nav.reload, nav.back, nav.fwd].map((i) => html`<div class="cell">${i}</div>`)}
      </div>
      <div class="row marks">
        <div class="row g5"><fit-text .w=${74.5}><span dir="rtl">العلامات الأخرى</span></fit-text>${ic(16, 14, "0 0 16 14", svg`<path d="M1 2.500C1 1.500 1.500 1 2.300 1h3.500L8 3h5.500c.8 0 1.500.5 1.500 1.300v7.200c0 .8-.7 1.500-1.500 1.500H2.300C1.500 13 1 12.300 1 11.500z" stroke=${G} stroke-width="1.300"/>`)}</div>
        <span class="grow"></span>
        <div class="row g5 m1"><fit-text .w=${125}>(68 unread) - coun.rm...</fit-text>${ic(15, 10, "0 0 15 10", svg`<path d="M0 0h15v10H0z" fill="#5f01d1"/><path d="M.5 0l7 4L14.500 0z" fill="#fff"/>`)}</div>
        <div class="row g5 m1"><fit-text .w=${29}><span dir="rtl">البداية</span></fit-text>${ic(16, 16, "0 0 16 16", svg`<circle cx="8" cy="8" r="7.800" fill="#e8741a"/><circle cx="8.500" cy="6.500" r="5" fill="#2a65a8"/><path d="M0 6c1-3 2-3 3-4 0 2 2 3 5 3L6 8c1 3 4 3 6 2-1 3-5 4-8 1z" fill="#f39a22"/>`)}</div>
        <div class="row g5"><fit-text .w=${51}><span dir="rtl">الأكثر زيارة</span></fit-text>${gear}</div>
      </div>

      <div class="main">
        <div class="hub">
          <div class="brand">${raven}<span class="dash">-</span>
            <div class="names"><div class="sci">sci</div><div class="bar"></div><div class="sci two">hub</div><div class="motto">to open<br>science</div></div>
          </div>
          <div class="save">↓ save</div>
          <div class="cite">Al-Mahalawy, H., El-
Mahallawy, Y., &amp; El
Tantawi, M. (2020).
<i>Dentists’ practices and
patient safety: a cross
sectional study. European
Journal of Dental
Education.</i>
doi:10.1111/eje.12513</div>
          <div class="meta"><fit-text .w=${116}>10.1111/eje.12513</fit-text>
            <div class="v"><fit-text .w=${54}>versions:</fit-text></div>
            <div><fit-text .w=${109}>from <s>2020-02-14</s></fit-text></div>
            <div><fit-text .w=${109}>from <s><b>2020-07-11</b></s></fit-text></div>
          </div>
          <div class="ball">${ic(14, 15, "0 0 14 15", svg`<path d="M0 7.500L13.500 0v15z" fill="#999"/>`)}</div>
        </div>
        <div class="viewer">
          <div class="row bar2">
            <div class="cell w30">${pdf.dbl}</div><div class="sep a"></div>
            <div class="cell w30">${pdf.mark}</div><div class="cell w30">${pdf.open}</div><div class="cell w30">${pdf.print}</div>
            <div class="zoom">${pdf.chev}<fit-text .w=${64}><span dir="rtl">تقريب تلقائي</span></fit-text></div>
            <div class="cell w30">${pdf.plus}</div><div class="sep"></div><div class="cell w26">${pdf.minus}</div>
            <span class="grow"></span>
            <fit-text .w=${24}><span dir="rtl">من 9</span></fit-text>
            <div class="pg">٢</div>
            <div class="cell w30">${pdf.down}</div><div class="sep"></div><div class="cell w30">${pdf.up}</div><div class="cell w31">${pdf.find}</div>
            <div class="cell btn a">${pdf.side}</div>
          </div>
          <div class="body">
            <div class="sb"><div class="up">${arrowUp}</div><i class="t1"></i><div class="dn">${arrowDn}</div></div>
            <div class="canvas">
              <div class="prevpage"></div>
              <div class="page">
                <div class="head">
                  <div class="num"><span>2</span><i></i></div>
                  <fit-text class="wiley" .w=${64}><big>W</big>ILEY</fit-text>
                  <div class="rule"><fit-text .w=${99}>AL-MAHALAWY <small>ET AL.</small></fit-text></div>
                </div>
                <div class="cols">
                  <div class="col">${left.map(line)}</div>
                  <div class="col">${figure}
                    <div class="cap"><div><fit-text .w=${296}><b>FIGURE 1</b> International patient safety goals (number of</fit-text></div><div><fit-text .w=${147}>questions used for each goal)</fit-text></div></div>
                    ${right.map(line)}</div>
                </div>
              </div>
            </div>
            <div class="side">
              <div class="row sbar"><div class="cell w30">${pdf.layers}</div><div class="cell w30">${pdf.clip}</div><div class="cell w30">${pdf.outline}</div><div class="cell btn">${pdf.grid}</div></div>
              <div class="panel">
                <div class="sb"><div class="up">${arrowUp}</div><i class="t2"></i><div class="dn">${arrowDn}</div></div>
                <div class="list">${thumbs.map((t, i) => html`<div class="tw ${i === 0 ? "first" : i === 1 ? "sel" : ""}"><div class="th">${ic(102, 132, "0 0 102 132", svg`<g stroke-linecap="butt">${t}</g>`)}</div></div>`)}</div>
              </div>
            </div>
          </div>
        </div>
      </div>

      <div class="row task">
        <div class="desk"></div>
        <div class="cell note">${ic(28, 28, "0 0 28 28", svg`<path d="M8 4h17v12h-3v3l-4-3H8z" fill="#fff"/><path d="M11 7.500h11M11 10.500h11" stroke="#070b12"/><circle cx="9" cy="19" r="8" fill="#333" stroke="#999"/><text x="9" y="23.500" text-anchor="middle" font-family="DejaVu Sans,sans-serif" font-size="12" fill="#fff">٢</text>`)}</div>
        <div class="clock"><fit-text .w=${36}><span dir="rtl">٠٣:٥٢ م</span></fit-text><fit-text .w=${42}><span dir="ltr">&#x202D;٤٣/٠٨/١٢&#x202C;</span></fit-text></div>
        <fit-text class="eng" .w=${23}>ENG</fit-text>
        <div class="cell">${ic(16, 14, "0 0 16 14", svg`<path d="M1.500 5v4H4l3 3V2L4 5zM10 5l4.500 4.500M14.500 5L10 9.500" stroke="#fff" stroke-width="1.100"/>`)}</div>
        <div class="cell bat">${ic(17, 14, "0 0 17 14", svg`<path d="M1 3h13v7H1zM14.500 5v3" stroke="#fff" stroke-width="1.200"/><path d="M3 5h2v3H3z" fill="#fff"/><circle cx="11" cy="9.500" r="4.400" fill="#10893e"/><path d="M11 6.500c2 1.500 1.500 4 0 4.500-1.500-.5-2-3 0-4.500zM11 11v2" fill="#fff" stroke="#fff" stroke-width=".7"/>`)}</div>
        <div class="cell wifi">${ic(14, 14, "0 0 14 14", svg`<path d="M1 11A10 10 0 0 1 12 1M3.500 12A7.500 7.500 0 0 1 12 4.500M6.500 12.500A5 5 0 0 1 12 8" stroke="#ddd" stroke-width="1.300"/><circle cx="11" cy="12" r="1.500" fill="#fff"/>`)}</div>
        <div class="cell more">${ic(12, 8, "0 0 12 8", svg`<path d="M1 6.500l5-5 5 5" stroke="#fff" stroke-width="1.300"/>`)}</div>
        <div class="cell ppl">${ic(16, 16, "0 0 16 16", svg`<circle cx="11" cy="4" r="2.900" stroke="#fff" stroke-width="1.200"/><circle cx="4.500" cy="8.500" r="2.200" stroke="#fff" stroke-width="1.200"/><path d="M1 15c0-5.500 7-5.500 7 0M8.500 8.500c3-3 6.500-.5 6.500 3" stroke="#fff" stroke-width="1.200"/>`)}</div>
        <span class="grow"></span>
        ${apps.map(([c, a]) => html`<div class="app ${c}">${ic(24, 24, "0 0 24 24", a)}</div>`)}
        ${sys.map((s, i) => html`<div class="cell sysb ${i ? "" : "a"}">${s}</div>`)}
      </div>
    </div>
    <div class="water"><fit-text class="a" .w=${141}><span dir="rtl">تنشيط Windows</span></fit-text><fit-text class="b" .w=${236}><span dir="rtl">انتقل إلى الإعدادت لتنشيط Windows.</span></fit-text></div>`;
  }
}
